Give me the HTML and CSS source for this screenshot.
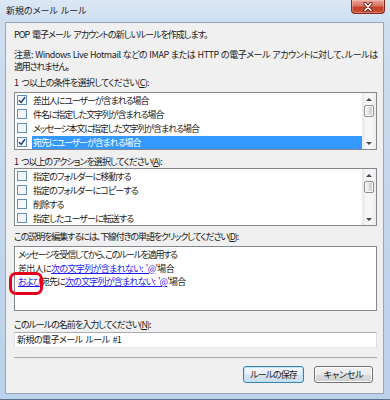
FILE: index.html
```html
<!DOCTYPE html>
<html lang="ja">
<head>
<meta charset="utf-8">
<title>新規のメール ルール</title>
<link rel="stylesheet" href="styles.css">
</head>
<body>
<div class="window">
  <div class="titlebar">
    <span class="title">新規のメール ルール</span>
    <span class="close"><svg width="16" height="10" viewBox="0 0 16 10"><path d="M5 1.5 L11 8.5 M11 1.5 L5 8.5" stroke="#5a1a12" stroke-width="3.2" stroke-linecap="round"/><path d="M5 1.5 L11 8.5 M11 1.5 L5 8.5" stroke="#ffffff" stroke-width="1.6" stroke-linecap="round"/></svg></span>
  </div>
  <div class="client">
    <p class="intro">POP 電子メール アカウントの新しいルールを作成します。</p>
    <p class="note">注意: Windows Live Hotmail などの IMAP または HTTP の電子メール アカウントに対して、ルールは<br><span class="note2">適用されません。</span></p>

    <div class="label l1">1 つ以上の条件を選択してください(<u>C</u>):</div>
    <div class="listbox lb1">
      <div class="items">
        <div class="item"><span class="cb checked"><svg width="8" height="8" viewBox="0 0 8 8"><path d="M1 4.2 L3.1 6.4 L7 1.3" fill="none" stroke="#1e3f78" stroke-width="1.5"/></svg></span><span class="txt">差出人にユーザーが含まれる場合</span></div>
        <div class="item"><span class="cb"></span><span class="txt">件名に指定した文字列が含まれる場合</span></div>
        <div class="item"><span class="cb"></span><span class="txt">メッセージ本文に指定した文字列が含まれる場合</span></div>
        <div class="item"><span class="cb checked"><svg width="8" height="8" viewBox="0 0 8 8"><path d="M1 4.2 L3.1 6.4 L7 1.3" fill="none" stroke="#1e3f78" stroke-width="1.5"/></svg></span><span class="txt sel">宛先にユーザーが含まれる場合</span></div>
      </div>
      <div class="scrollbar">
        <div class="sb-btn"><span class="arrow up"></span></div>
        <div class="sb-thumb"></div>
        <div class="sb-track"></div>
        <div class="sb-btn"><span class="arrow down"></span></div>
      </div>
    </div>

    <div class="label l2">1 つ以上のアクションを選択してください(<u>A</u>):</div>
    <div class="listbox lb2">
      <div class="items">
        <div class="item"><span class="cb"></span><span class="txt">指定のフォルダーに移動する</span></div>
        <div class="item"><span class="cb"></span><span class="txt">指定のフォルダーにコピーする</span></div>
        <div class="item"><span class="cb"></span><span class="txt">削除する</span></div>
        <div class="item"><span class="cb"></span><span class="txt">指定したユーザーに転送する</span></div>
      </div>
      <div class="scrollbar">
        <div class="sb-btn"><span class="arrow up"></span></div>
        <div class="sb-thumb"></div>
        <div class="sb-track"></div>
        <div class="sb-btn"><span class="arrow down"></span></div>
      </div>
    </div>

    <div class="label l3">この説明を編集するには、下線付きの単語をクリックしてください(<u>D</u>):</div>
    <div class="desc">
      <div class="line line1">メッセージを受信してから、このルールを適用する</div>
      <div class="line line2">差出人に<a class="link">次の文字列が含まれない: '@</a>'場合</div>
      <div class="line line3"><a class="link">および</a>宛先に<a class="link">次の文字列が含まれない: '@</a>'場合</div>
      <span class="mark"></span>
    </div>

    <div class="label l4">このルールの名前を入力してください(<u>N</u>):</div>
    <div class="input">新規の電子メール ルール #1</div>

    <div class="sep"></div>

    <div class="buttons">
      <span class="btn default">ルールの保存</span>
      <span class="btn cancel">キャンセル</span>
    </div>
  </div>
</div>
</body>
</html>
```

FILE: styles.css
```css
html, body {
  margin: 0;
  padding: 0;
}
body {
  width: 390px;
  height: 400px;
  overflow: hidden;
  font-family: "Noto Sans CJK JP", "Noto Sans", sans-serif;
  font-feature-settings: "palt";
  font-size: 9px;
  color: #1a1a1a;
}
.window {
  width: 390px;
  height: 400px;
  box-sizing: border-box;
  padding: 0 6px 5px 5px;
  display: flex;
  flex-direction: column;
  background: linear-gradient(180deg, #dce7f4 0px, #cfdff0 22px, #c3d6ec 200px, #bcd2ea 400px);
  border-bottom: 1px solid #5d7290;
}
.titlebar {
  height: 22px;
  display: flex;
  justify-content: space-between;
  align-items: flex-start;
  margin-right: -1px;
}
.title {
  line-height: 12px;
  margin-top: 5px;
  margin-left: 1px;
  color: #1e1e1e;
  word-spacing: 1px;
}
.close {
  width: 34px;
  height: 14px;
  box-sizing: border-box;
  border: 1px solid #7f2a1c;
  border-top: none;
  border-radius: 0 0 4px 4px;
  background: linear-gradient(180deg, #e9a99b 0%, #d9725f 45%, #c3402a 55%, #c94e34 100%);
  display: flex;
  align-items: center;
  justify-content: center;
  box-shadow: inset 0 0 0 1px rgba(255,210,200,0.35);
}
.close svg { display: block; }
.client {
  flex: 1;
  border: 1px solid #97a6ba;
  background: #f0f0f0;
  padding: 0 6px 0 8px;
  display: flex;
  flex-direction: column;
}
p { margin: 0; }
.intro {
  line-height: 12px;
  margin-top: 6px;
  white-space: nowrap;
  letter-spacing: -1px;
  word-spacing: 2px;
}
.note {
  line-height: 12px;
  margin-top: 8px;
  white-space: nowrap;
  letter-spacing: -0.45px;
  word-spacing: 0.6px;
}
.note2 { letter-spacing: -1.2px; }
.label {
  line-height: 12px;
  white-space: nowrap;
}
.label u { text-decoration: underline; }
.l1 { margin-top: 4px; letter-spacing: -0.7px; word-spacing: 1.6px; }
.l2 { margin-top: 6px; letter-spacing: -0.95px; word-spacing: 1.8px; }
.l3 { margin-top: 5px; letter-spacing: -1.1px; }
.l4 { margin-top: 8px; letter-spacing: -1px; }

.listbox {
  display: flex;
  border: 1px solid #828790;
  background: #ffffff;
  height: 58px;
  box-sizing: border-box;
}
.lb1 { margin-top: 3px; }
.lb2 { margin-top: 0; }
.items {
  flex: 1;
  display: flex;
  flex-direction: column;
}
.item {
  height: 14px;
  display: flex;
  align-items: center;
  white-space: nowrap;
}
.cb {
  width: 10px;
  height: 10px;
  box-sizing: border-box;
  margin-left: 2px;
  border: 1px solid #5c8fc0;
  background: linear-gradient(135deg, #e6eef7 0%, #ffffff 100%);
  box-shadow: inset 0 0 0 1px #f4f8fc;
  display: flex;
  align-items: center;
  justify-content: center;
}
.cb svg { display: block; }
.txt {
  margin-left: 5px;
  padding: 0 1px;
  line-height: 13px;
  height: 13px;
}
.lb1 .txt { letter-spacing: -1.1px; }
.lb2 .txt { letter-spacing: -0.9px; }
.txt.sel {
  flex: 1;
  background: #3399ff;
  color: #ffffff;
}
.scrollbar {
  width: 14px;
  display: flex;
  flex-direction: column;
  align-items: center;
  background: linear-gradient(90deg, #e8e8e8 0%, #f6f6f6 30%, #f6f6f6 70%, #ececec 100%);
}
.sb-btn {
  height: 12px;
  width: 14px;
  display: flex;
  align-items: center;
  justify-content: center;
}
.arrow {
  width: 0;
  height: 0;
  border-left: 3px solid transparent;
  border-right: 3px solid transparent;
}
.arrow.up { border-bottom: 3px solid #4a4a4a; }
.arrow.down { border-top: 3px solid #4a4a4a; }
.sb-thumb {
  width: 10px;
  height: 12px;
  box-sizing: border-box;
  border: 1px solid #8e8f8f;
  border-radius: 2px;
  background: linear-gradient(90deg, #f4f4f4 0%, #e6e6e6 50%, #d9d9d9 51%, #cfcfcf 100%);
  box-shadow: inset 0 0 0 1px #fbfbfb;
}
.sb-track { flex: 1; }

.desc {
  position: relative;
  margin-top: 3px;
  height: 65px;
  box-sizing: border-box;
  border: 1px solid #828790;
  background: #ffffff;
  padding: 1px 3px 0 3px;
}
.line {
  line-height: 13.5px;
  white-space: nowrap;
}
.line1 { letter-spacing: -1.3px; }
.line2 { letter-spacing: -0.65px; word-spacing: 1.5px; }
.line3 { letter-spacing: -0.8px; word-spacing: 1.6px; }
.link {
  color: #1a1aee;
  text-decoration: underline;
}
.mark {
  position: absolute;
  left: -6px;
  top: 25px;
  width: 34px;
  height: 23px;
  box-sizing: border-box;
  border: 3px solid #e4001a;
  border-radius: 7px;
}
.input {
  margin-top: 1px;
  height: 16px;
  box-sizing: border-box;
  border: 1px solid;
  border-color: #abadb3 #dbdfe6 #e3e9ef #e2e3ea;
  background: #ffffff;
  padding: 0 2px;
  line-height: 14px;
  white-space: nowrap;
  letter-spacing: -0.55px;
  word-spacing: 1.5px;
}
.sep {
  margin-top: 9px;
  height: 1px;
  background: #a9a9a9;
}
.buttons {
  margin-top: 8px;
  display: flex;
  justify-content: flex-end;
  gap: 10px;
  padding-right: 4px;
}
.btn {
  height: 17px;
  box-sizing: border-box;
  border: 1px solid #707070;
  border-radius: 3px;
  background: linear-gradient(180deg, #f2f2f2 0%, #ebebeb 50%, #dddddd 51%, #cfcfcf 100%);
  box-shadow: inset 0 0 0 1px #fcfcfc;
  display: flex;
  align-items: center;
  justify-content: center;
  width: 59px;
  line-height: 13px;
}
.btn.default {
  width: 61px;
  letter-spacing: -1px;
  border-color: #3c7fb1;
  background: linear-gradient(180deg, #f3f8fc 0%, #e6eff7 50%, #d6e3ee 51%, #cadcec 100%);
  box-shadow: inset 0 0 0 1px #bfe3f8;
}
.btn.cancel { letter-spacing: -0.2px; }
```
